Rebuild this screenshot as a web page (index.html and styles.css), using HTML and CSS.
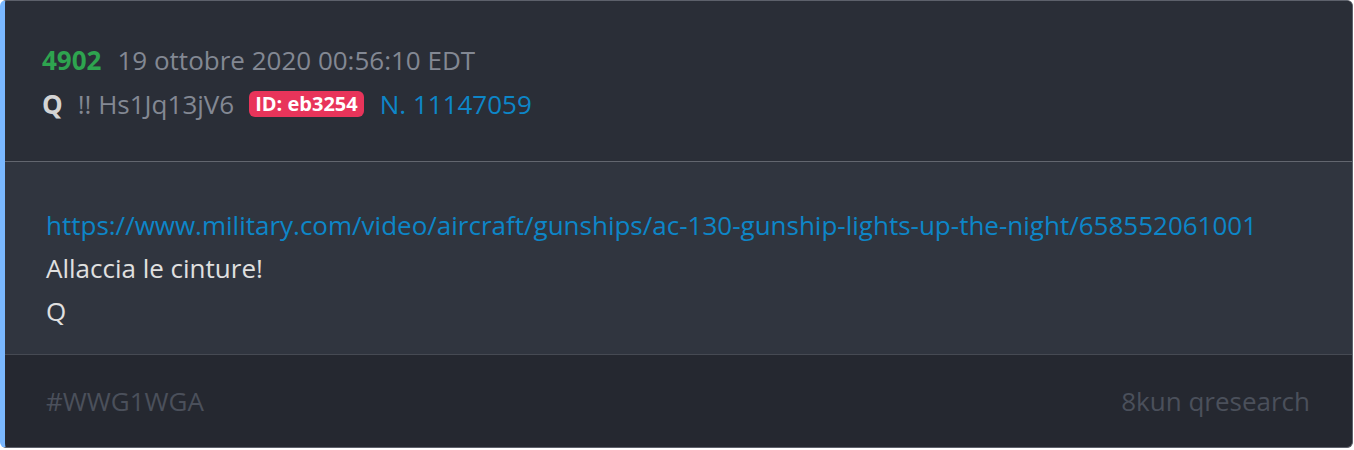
FILE: index.html
```html
<!DOCTYPE html>
<html lang="it">
<head>
<meta charset="utf-8">
<link rel="stylesheet" href="styles.css">
</head>
<body>
<div class="card">
  <div class="head">
    <div class="row">
      <span class="num">4902</span>
      <span class="date">19 ottobre 2020 00:56:10 EDT</span>
    </div>
    <div class="row">
      <span class="author">Q</span>
      <span class="trip">!! Hs1Jq13jV6</span>
      <span class="badge">ID: eb3254</span>
      <span class="postno">N. 11147059</span>
    </div>
  </div>
  <div class="body">
    <div class="line"><a class="link" href="#">https://www.military.com/video/aircraft/gunships/ac-130-gunship-lights-up-the-night/658552061001</a></div>
    <div class="line">Allaccia le cinture!</div>
    <div class="line">Q</div>
  </div>
  <div class="foot">
    <span>#WWG1WGA</span>
    <span>8kun qresearch</span>
  </div>
</div>
</body>
</html>
```
FILE: styles.css
```css
html, body {
  margin: 0;
  padding: 0;
  background: #ffffff;
}
body {
  font-family: "Open Sans", "Noto Sans", sans-serif;
  font-size: 26px;
}
.card {
  width: 1353px;
  height: 448px;
  box-sizing: border-box;
  border: 1px solid #5d616b;
  border-left: 5px solid #7ab8ff;
  border-radius: 6px;
  overflow: hidden;
  display: flex;
  flex-direction: column;
  background: #252830;
}
.head {
  background: #2a2e37;
  padding: 37px 0 0 37px;
  height: 161px;
  box-sizing: border-box;
  border-bottom: 1px solid #62666f;
}
.row {
  display: flex;
  align-items: center;
  height: 44px;
  white-space: nowrap;
}
.num {
  color: #2ea44f;
  font-weight: 700;
  margin-right: 16px;
}
.date {
  color: #838893;
}
.author {
  color: #d4d4d4;
  font-weight: 700;
  margin-right: 15px;
}
.trip {
  color: #838893;
  margin-right: 15px;
}
.badge {
  background: #e8345a;
  color: #ffffff;
  font-weight: 700;
  font-size: 20px;
  line-height: 26px;
  padding: 0 6px;
  border-radius: 6px;
  margin-right: 16px;
}
.postno {
  color: #0d86c8;
}
.body {
  background: #30353f;
  padding: 42px 0 0 41px;
  height: 193px;
  box-sizing: border-box;
  border-bottom: 1px solid #464a53;
}
.line {
  line-height: 43px;
  color: #e0e0e0;
  white-space: nowrap;
}
.link {
  color: #0d86c8;
  text-decoration: none;
}
.foot {
  flex: 1;
  display: flex;
  justify-content: space-between;
  align-items: center;
  padding: 0 42px 0 41px;
  color: #4b505b;
}
```
